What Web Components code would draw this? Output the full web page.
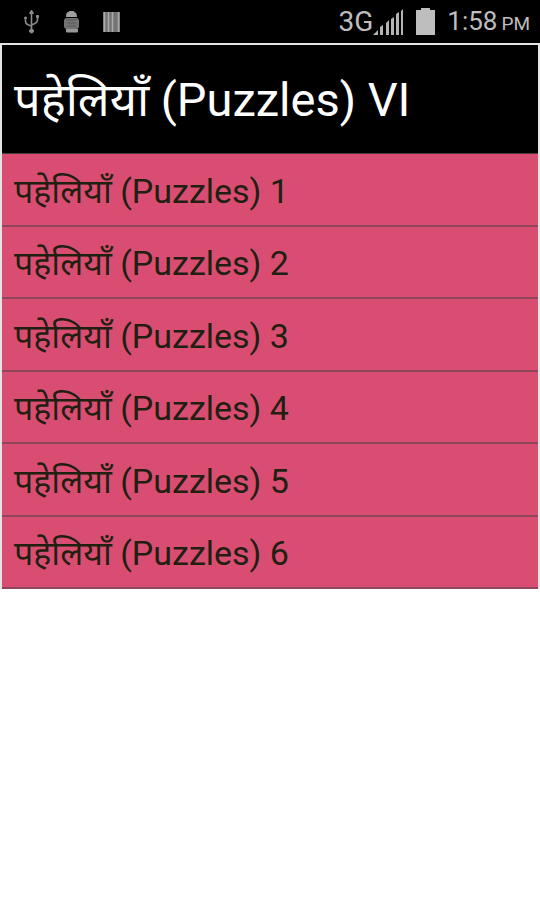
<!DOCTYPE html>
<html lang="hi">
<head>
<meta charset="utf-8">
<meta name="viewport" content="width=device-width, initial-scale=1">
<title>पहेलियाँ (Puzzles) VI</title>
<style>
  body {
    margin: 0;
    background: #fff;
    font-family: Roboto, "Noto Sans Devanagari", "Noto Sans", sans-serif;
  }
</style>
</head>
<body>
<status-bar>
  <span slot="network">3G</span>
  <span slot="time">1:58</span>
  <span slot="period">PM</span>
</status-bar>

<puzzle-list>
  <span slot="title">पहेलियाँ (Puzzles) VI</span>
  <puzzle-row href="#1">पहेलियाँ (Puzzles) 1</puzzle-row>
  <puzzle-row href="#2">पहेलियाँ (Puzzles) 2</puzzle-row>
  <puzzle-row href="#3">पहेलियाँ (Puzzles) 3</puzzle-row>
  <puzzle-row href="#4">पहेलियाँ (Puzzles) 4</puzzle-row>
  <puzzle-row href="#5">पहेलियाँ (Puzzles) 5</puzzle-row>
  <puzzle-row href="#6">पहेलियाँ (Puzzles) 6</puzzle-row>
</puzzle-list>

<script>
class StatusBar extends HTMLElement {
  constructor() {
    super();
    this.attachShadow({ mode: 'open' });

    this.shadowRoot.innerHTML = `
      <style>
        :host {
          display: flex;
          align-items: center;
          justify-content: space-between;
          height: 43px;
          padding: 0 10px 0 22px;
          background: #000;
          color: #bebebe;
          white-space: nowrap;
        }

        svg { display: block; }

        .notifications,
        .system,
        .signal {
          display: flex;
          align-items: center;
        }

        .notifications { gap: 20px; }
        .system { gap: 12px; }

        .network {
          font-size: 28px;
          line-height: 32px;
        }

        .clock {
          display: flex;
          align-items: baseline;
          gap: 4px;
          padding-top: 2px;
          font-size: 26px;
          line-height: 32px;
        }

        .period { font-size: 19px; }
      </style>

      <div class="notifications">
        <svg width="20" height="26" viewBox="0 0 20 26" fill="none" stroke="#8c8c8c" stroke-width="1.6">
          <path d="M9.500 3v18M3.500 9v3.500q0 3 6 4.500M15.500 8v3q0 3-6 5"/>
          <path d="M9.500 1l-2 3.500h4zM9.500 20a2 2 0 1 0 .01 0zM3.500 8a1 1 0 1 0 .01 0zM14.500 6.500h2v2h-2z" fill="#8c8c8c" stroke-width="1"/>
        </svg>
        <svg width="20" height="26" viewBox="0 0 20 26">
          <path d="M4 8Q4 3 6.500 3l1-1h4l1 1Q15 4 15 8z" fill="#a0a0a0"/>
          <rect x="2" y="9" width="15" height="11" rx="3" fill="#727272"/>
          <path d="M5 11h9M5 14h9M5 17h9" stroke="#595959" stroke-width="1"/>
          <path d="M4 20h12v2.500q0 1-1 1H5q-1 0-1-1z" fill="#999"/>
        </svg>
        <svg width="20" height="26" viewBox="0 0 20 26">
          <path d="M1 3h17v20H1z" fill="#747474"/>
          <path d="M2.500 3v20M6.500 3v20M10.500 3v20M16.500 3v20" stroke="#aaa" stroke-width="1.500"/>
        </svg>
      </div>

      <div class="system">
        <div class="signal">
          <span class="network"><slot name="network"></slot></span>
          <svg width="31" height="28" viewBox="0 0 31 28" fill="#b4b4b4">
            <path d="M0 27l5-5v5zM7 19l3-2v10H7zM13 15l3-3v15h-3zM18 11l3-2v18h-3zM23 6l3-2v23h-3zM28 3l2-2v26h-2z"/>
          </svg>
        </div>
        <svg width="19" height="28" viewBox="0 0 19 28">
          <path d="M0 2h5V0h9v2h5v25H0z" fill="#bebebe"/>
        </svg>
        <div class="clock">
          <slot name="time"></slot>
          <span class="period"><slot name="period"></slot></span>
        </div>
      </div>
    `;
  }
}

class PuzzleList extends HTMLElement {
  constructor() {
    super();
    this.attachShadow({ mode: 'open' });

    this.shadowRoot.innerHTML = `
      <style>
        :host {
          display: block;
          border: 2px solid #e4e4e4;
          border-bottom: none;
        }

        h1 {
          display: flex;
          align-items: center;
          height: 109px;
          margin: 0;
          padding: 2px 12px 0;
          background: #000;
          border-bottom: 1px solid #4a3a3e;
          box-sizing: border-box;
          color: #fff;
          font-size: 47px;
          font-weight: 400;
          line-height: 56px;
          white-space: nowrap;
        }

        ::slotted(puzzle-row) { height: 72px; }
        ::slotted(puzzle-row:nth-of-type(odd)) { height: 73px; }
      </style>

      <h1><slot name="title"></slot></h1>
      <nav><slot></slot></nav>
    `;
  }
}

class PuzzleRow extends HTMLElement {
  constructor() {
    super();
    this.attachShadow({ mode: 'open' });

    this.shadowRoot.innerHTML = `
      <style>
        :host {
          display: flex;
          box-sizing: border-box;
          background: #da4d73;
          border-bottom: 2px solid #8f465b;
        }

        a {
          flex: 1;
          display: flex;
          align-items: center;
          padding: 2px 12px 0;
          color: #1f2010;
          font-size: 34px;
          line-height: 40px;
          text-decoration: none;
          white-space: nowrap;
        }
      </style>

      <a><span><slot></slot></span></a>
    `;
  }

  connectedCallback() {
    this.shadowRoot.querySelector('a').href = this.getAttribute('href');
  }
}

customElements.define('status-bar', StatusBar);
customElements.define('puzzle-list', PuzzleList);
customElements.define('puzzle-row', PuzzleRow);
</script>
</body>
</html>
